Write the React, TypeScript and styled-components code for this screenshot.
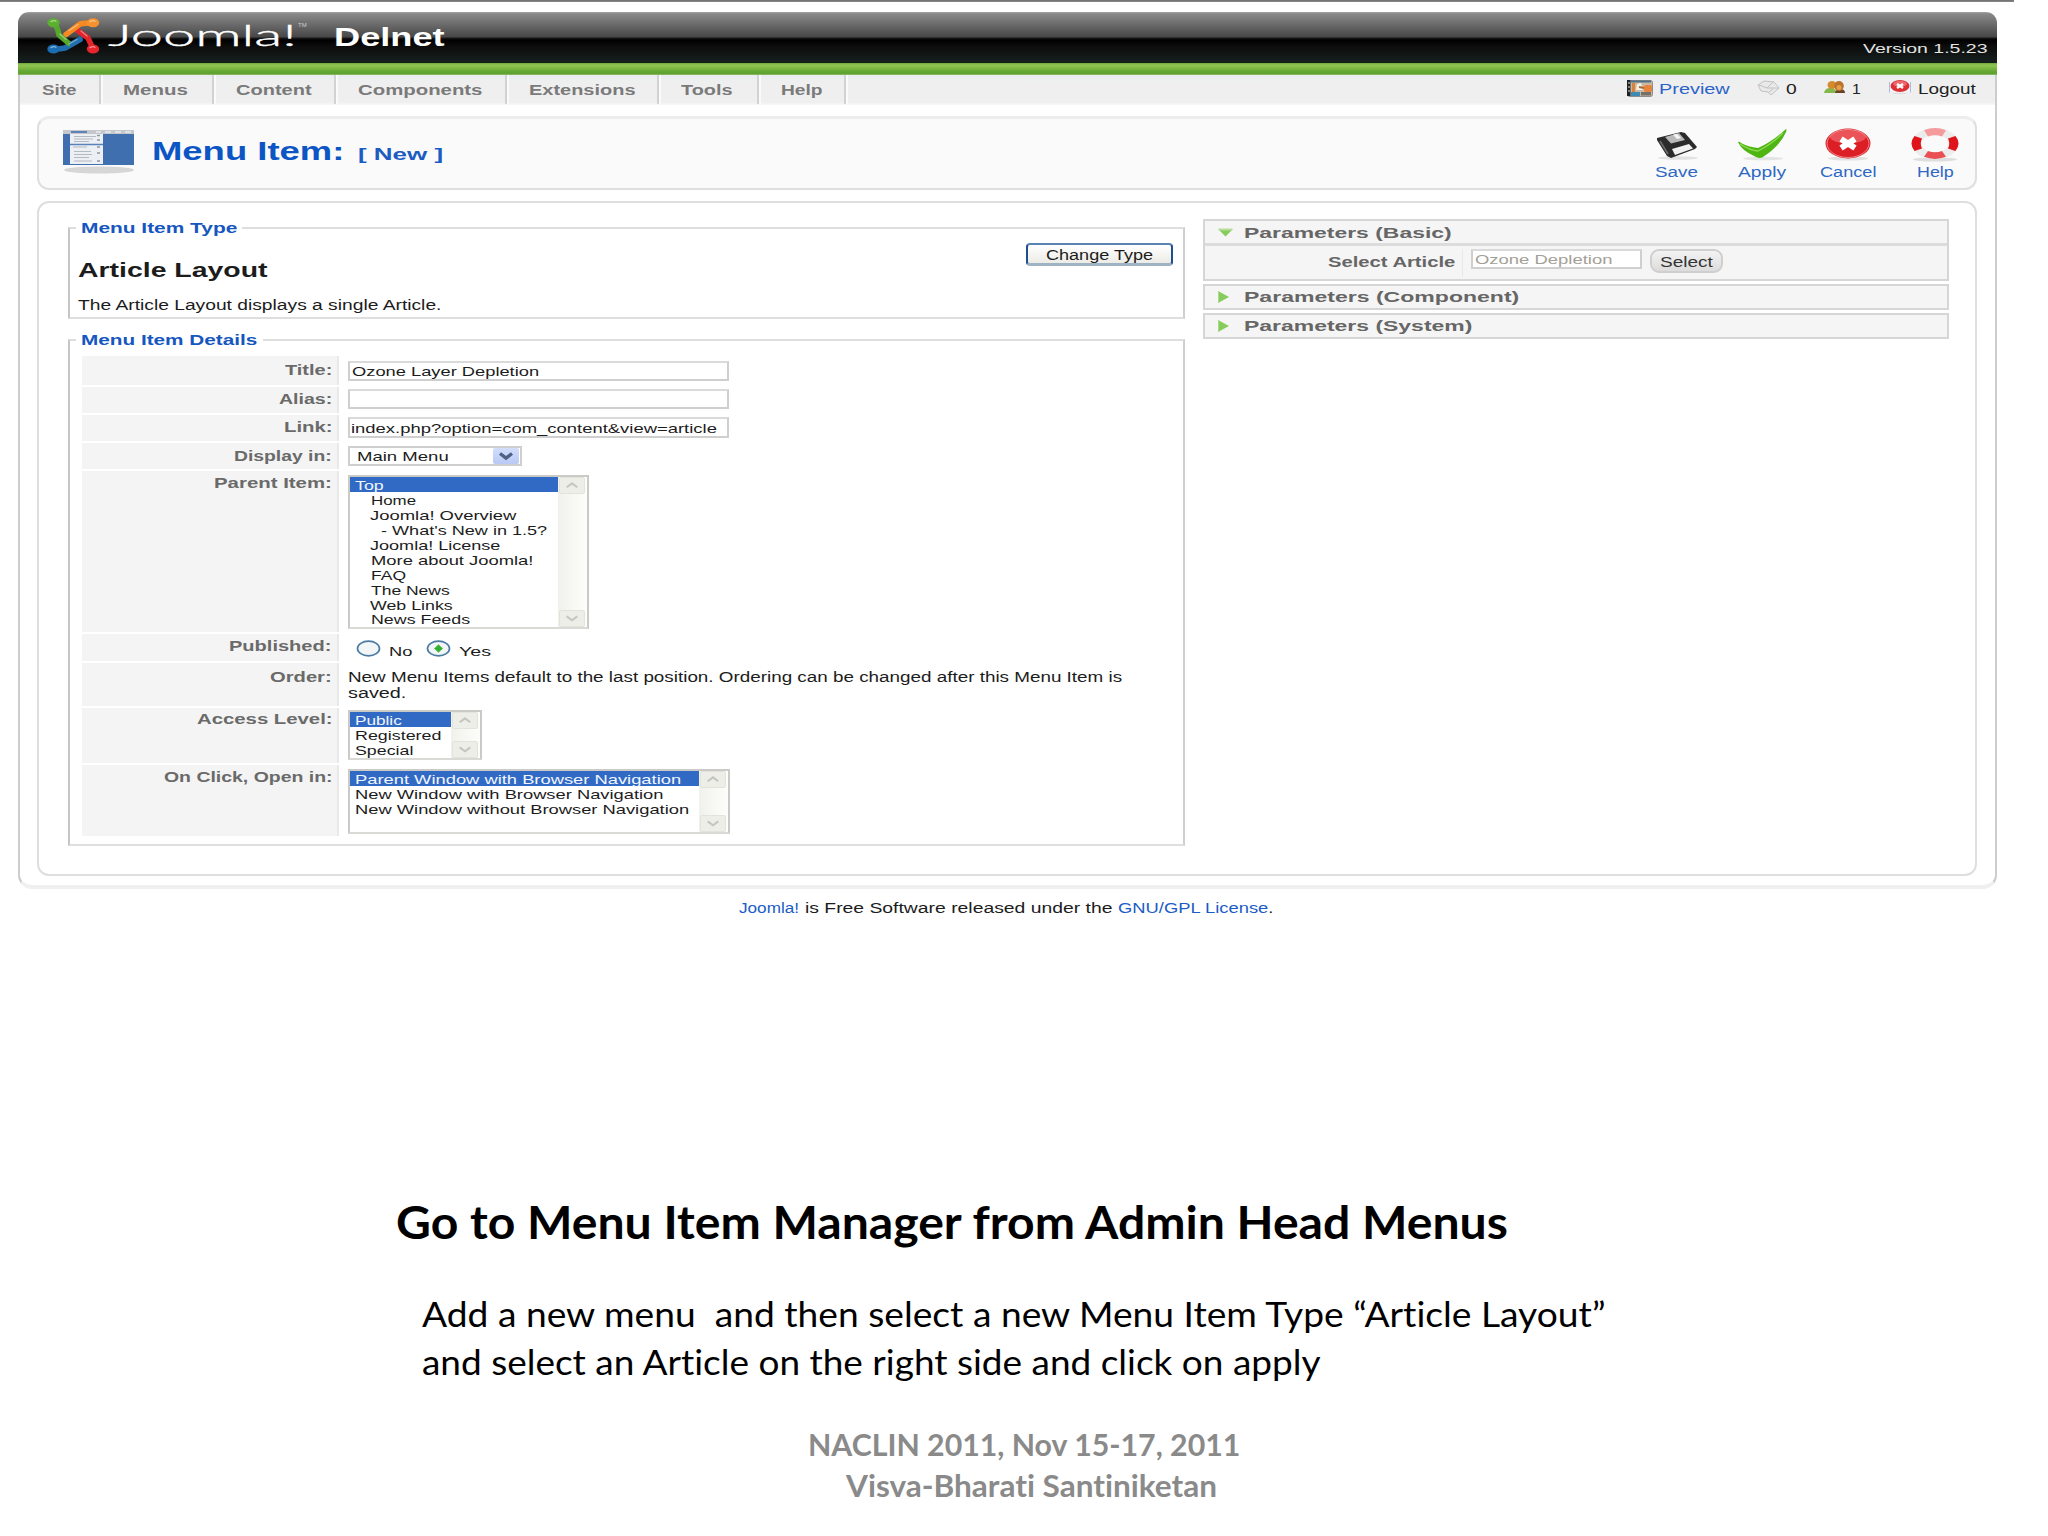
import React, { useLayoutEffect, useRef, useState } from 'react';
import styled, { createGlobalStyle } from 'styled-components';

const Global = createGlobalStyle`
  *, *::before, *::after { box-sizing: border-box; }
  body { margin: 0; background: #fff; overflow: hidden; font-family: "Liberation Sans", Arial, sans-serif; font-variant-ligatures: none; color: #1c1c1c; }
`;

/* ---------- text that stretches to a set width ---------- */

const FitBox = styled.span<{ $w: number; $h: number }>`
  display: block;
  flex: none;
  width: ${(p) => p.$w}px;
  height: ${(p) => p.$h}px;
  line-height: ${(p) => p.$h}px;
  white-space: pre;
`;

const FitInk = styled.span`
  display: inline-block;
  transform-origin: 0 50%;
`;

function Fit({ w, h = 16, children, className }: { w: number; h?: number; children: React.ReactNode; className?: string }) {
  const ref = useRef<HTMLSpanElement>(null);
  const [scale, setScale] = useState(1);
  useLayoutEffect(() => {
    const el = ref.current;
    if (el && el.offsetWidth) setScale(w / el.offsetWidth);
  }, [w]);
  return (
    <FitBox $w={w} $h={h} className={className}>
      <FitInk ref={ref} style={{ transform: `scaleX(${scale})` }}>{children}</FitInk>
    </FitBox>
  );
}

/* ---------- shell ---------- */

const Page = styled.div`
  width: 2048px;
  height: 1536px;
  display: flex;
  flex-direction: column;
  align-items: flex-start;
  overflow: hidden;
`;

const TopRule = styled.div`
  width: 2014px;
  height: 2px;
  background: linear-gradient(#6c6c6c, #8d8d8d);
`;

const Frame = styled.div`
  width: 1979px;
  margin: 10px 0 0 18px;
`;

const Header = styled.header`
  height: 51px;
  border-radius: 11px 11px 0 0;
  display: flex;
  align-items: flex-start;
  background: linear-gradient(#a4a4a4 0, #888 2px, #474747 25px, #1a1a1a 26px, #000 28px, #0c0c0c 34px, #16201e 50px, #0b1a12 51px);
  color: #fff;
`;

const LogoMark = styled.svg`
  width: 53px;
  height: 36px;
  margin: 6px 0 0 29px;
  flex: none;
`;

const Wordmark = styled(Fit)`
  margin: 8px 0 0 8px;
  font-family: Lato, sans-serif;
  font-weight: 300;
  font-size: 29px;
  -webkit-text-stroke: 0.4px #fff;
`;

const Trademark = styled(Fit)`
  margin: 9px 0 0 1px;
  font-size: 6px;
  color: #ccc;
`;

const SiteName = styled(Fit)`
  margin: 10px 0 0 27px;
  font-size: 25px;
  font-weight: bold;
`;

const Version = styled(Fit)`
  margin: 29px 10px 0 auto;
  font-size: 13.5px;
  color: #e4e4e4;
`;

const GreenBar = styled.div`
  height: 12px;
  background: linear-gradient(#6fa53b 0, #8fc552 2px, #86be48 4px, #66a935 8px, #5f9f30 11px, #a9cc8c 12px);
`;

const Body = styled.div`
  height: 814px;
  border: 2px solid #cdcdcd;
  border-top: 0;
  border-bottom: 4px solid #f0f0f0;
  border-radius: 0 0 14px 14px;
`;

/* ---------- menu bar ---------- */

const MenuBar = styled.nav`
  height: 30px;
  display: flex;
  background: linear-gradient(#e9edf0, #efefef 8px, #efefef 27px, #f8f8f8);
`;

const MenuEntry = styled.div<{ $w: number }>`
  width: ${(p) => p.$w}px;
  height: 29px;
  padding: 7px 0 0 22px;
  border-right: 2px solid #d2d2d2;
  box-shadow: 2px 0 0 #fafafa;
  font-size: 14.5px;
  font-weight: bold;
  color: #7a7a7a;
`;

const Status = styled.div`
  margin-left: auto;
  padding: 6px 19px 0 0;
  display: flex;
  gap: 27px;
`;

const StatusItem = styled.div<{ $link?: boolean }>`
  display: flex;
  gap: 6px;
  font-size: 14px;
  color: ${(p) => (p.$link ? '#2a62c8' : '#222')};
`;

const StatusIcon = styled.svg`
  flex: none;
  margin-top: -1px;
`;

/* ---------- title bar ---------- */

const TitleBar = styled.section`
  width: 1940px;
  height: 74px;
  margin: 11px 0 0 17px;
  display: flex;
  border: 2px solid #dfdfdf;
  border-top: 3px solid #ededed;
  border-radius: 12px;
  background: #fafafa;
`;

const TitleIcon = styled.svg`
  width: 71px;
  height: 45px;
  margin: 11px 0 0 24px;
`;

const Title = styled(Fit)`
  margin: 17px 0 0 18px;
  font-size: 26px;
  font-weight: bold;
  color: #0b55c4;
`;

const TitleNote = styled(Fit)`
  margin: 25px 0 0 14px;
  font-size: 16.5px;
  font-weight: bold;
  color: #1c5cc2;
`;

const Tools = styled.div`
  margin-left: auto;
  display: flex;
  margin-right: -4px;
`;

const Tool = styled.div<{ $w: number }>`
  width: ${(p) => p.$w}px;
  padding-top: 9px;
  display: flex;
  flex-direction: column;
  align-items: center;
  font-size: 14px;
  color: #2f68c4;
`;

const ToolIcon = styled.svg`
  width: 52px;
  height: 36px;
`;

/* ---------- content ---------- */

const Content = styled.main`
  width: 1940px;
  height: 675px;
  margin: 11px 0 0 17px;
  padding: 16px 0 0 29px;
  display: flex;
  gap: 18px;
  border: 2px solid #dedede;
  border-radius: 12px;
`;

const LeftColumn = styled.div`
  width: 1117px;
  display: flex;
  flex-direction: column;
  gap: 12px;
`;

const FieldSet = styled.fieldset<{ $h: number }>`
  margin: 0;
  padding: 0;
  min-width: 0;
  height: ${(p) => p.$h}px;
  border: 2px solid #dedede;
  border-left-color: #c6c6c6;
  border-right-color: #cfcfcf;
`;

const Legend = styled.legend`
  margin-left: 6px;
  padding: 0 5px;
  font-size: 15px;
  font-weight: bold;
  color: #1556bf;
`;

const TypeRow = styled.div`
  display: flex;
  justify-content: space-between;
  padding: 7px 10px 0 8px;
`;

const TypeHeading = styled(Fit)`
  margin-top: 15px;
  font-size: 20px;
  font-weight: bold;
`;

const TypeNote = styled(Fit)`
  margin-top: 15px;
  font-size: 14px;
`;

const ChangeButton = styled.button`
  width: 147px;
  height: 23px;
  padding: 2px 0 0 18px;
  border: 2px solid #1e4f8c;
  border-bottom: 3px solid #9fb3c4;
  border-top-color: #5a82b2;
  border-radius: 4px;
  background: linear-gradient(#fff, #ecebe6);
  font: 14px "Liberation Sans", Arial, sans-serif;
  color: #1c1c1c;
  text-align: left;
`;

const Rows = styled.div`
  padding: 8px 0 0 12px;
  display: flex;
  flex-direction: column;
  gap: 2px;
`;

const Row = styled.div<{ $h: number }>`
  height: ${(p) => p.$h}px;
  display: grid;
  grid-template-columns: 257px 1fr;
`;

const Label = styled.div<{ $top: number }>`
  display: flex;
  justify-content: flex-end;
  padding: ${(p) => p.$top}px 5px 0 0;
  background: #f4f4f4;
  border-right: 2px solid #e9e9e9;
  font-size: 14px;
  font-weight: bold;
  color: #6a6a6a;
`;

const Control = styled.div<{ $top: number }>`
  padding: ${(p) => p.$top}px 0 0 9px;
  font-size: 14px;
`;

const TextBox = styled.div<{ $w: number; $h: number; $pad?: number; $muted?: boolean }>`
  width: ${(p) => p.$w}px;
  height: ${(p) => p.$h}px;
  padding: 1px 0 0 ${(p) => p.$pad ?? 2}px;
  border: 2px solid #cfcfcf;
  border-top-color: #dadada;
  background: #fff;
  font-size: 13.5px;
  color: ${(p) => (p.$muted ? '#a3a097' : '#1c1c1c')};
`;

const Combo = styled.div`
  width: 174px;
  height: 20px;
  display: flex;
  justify-content: space-between;
  padding-left: 7px;
  border: 2px solid #cfcfcf;
  font-size: 13.5px;
`;

const ComboArrow = styled.svg`
  width: 26px;
  height: 16px;
  margin-right: 1px;
  border-radius: 2px;
  background: linear-gradient(#d3ddfc, #b9c9f5);
`;

const ListBox = styled.div<{ $w: number; $h: number }>`
  width: ${(p) => p.$w}px;
  height: ${(p) => p.$h}px;
  display: flex;
  border: 2px solid #cbcac6;
  border-bottom-color: #d9d9d6;
  background: #fff;
`;

const Options = styled.div`
  flex: 1;
`;

const Option = styled.div<{ $indent?: number; $selected?: boolean }>`
  height: 14.95px;
  padding-left: ${(p) => 5 + (p.$indent ?? 0)}px;
  font-size: 13.5px;
  background: ${(p) => (p.$selected ? '#316ac5' : 'transparent')};
  color: ${(p) => (p.$selected ? '#f2f6fd' : '#1c1c1c')};
`;

const ScrollTrack = styled.div`
  width: 29px;
  display: flex;
  flex-direction: column;
  justify-content: space-between;
  padding: 0 2px 0 1px;
  background: linear-gradient(90deg, #f1f1ec, #fdfdfb);
`;

const ScrollCap = styled.svg`
  width: 26px;
  height: 17px;
  border: 1px solid #e3e3dc;
  border-radius: 2px;
  background: #eeeee8;
`;

const RadioRow = styled.div`
  display: flex;
  align-items: flex-start;
  padding-left: 8px;
  font-size: 13.5px;
`;

const RadioDot = styled.svg`
  width: 25px;
  height: 17px;
`;

const RadioText = styled(Fit)`
  margin: 3px 14px 0 8px;
`;

/* ---------- accordion ---------- */

const RightColumn = styled.div`
  width: 746px;
  display: flex;
  flex-direction: column;
  gap: 3px;
`;

const Panel = styled.section`
  border: 2px solid #d6d6d6;
  background: #f5f5f5;
`;

const PanelHead = styled.div`
  height: 22px;
  display: flex;
  padding: 2px 0 0 13px;
  font-size: 15.5px;
  font-weight: bold;
  color: #666;
`;

const Marker = styled.svg`
  width: 16px;
  height: 13px;
  margin: 3px 10px 0 0;
`;

const PanelBody = styled.div`
  height: 36px;
  display: grid;
  grid-template-columns: 258px 171px auto;
  column-gap: 8px;
  justify-content: start;
  border-top: 3px solid #dcdcdc;
  padding-top: 3px;
`;

const ParamLabel = styled.div`
  height: 28px;
  display: flex;
  justify-content: flex-end;
  padding: 5px 7px 0 0;
  border-right: 1px solid #e8e8e8;
  font-size: 14px;
  font-weight: bold;
  color: #666;
`;

const SelectButton = styled.div`
  width: 73px;
  height: 24px;
  padding: 3px 0 0 8px;
  border: 2px solid #cfcfcf;
  border-radius: 9px;
  background: linear-gradient(#f3f3f3, #dcdcdc);
  font-size: 14px;
  color: #333;
`;

/* ---------- captions ---------- */

const Credit = styled.div`
  margin: 11px 0 0 739px;
  display: flex;
  font-size: 14px;
`;

const CreditLink = styled(Fit)`
  color: #1b5cc6;
  margin-right: 6px;
`;

const CreditText = styled(Fit)`
  margin-right: 5px;
`;

const CreditSpan = styled.span`
  color: #1b5cc6;
`;

const Caption = styled.div`
  margin: 276px 0 0 396px;
  font-family: Lato, Carlito, sans-serif;
  color: #000;
`;

const CaptionTitle = styled(Fit)`
  font-size: 45px;
  font-weight: bold;
`;

const CaptionText = styled.div`
  margin: 38px 0 0 26px;
  font-size: 34.5px;
`;

const SlideFooter = styled.div`
  width: 432px;
  margin: 38px 0 0 412px;
  display: flex;
  flex-direction: column;
  align-items: center;
  font-size: 29.5px;
  font-weight: bold;
  color: #8a8a8a;
`;

const SecondLine = styled(Fit)`
  margin-left: 14px;
`;

/* ---------- drawings ---------- */

const JoomlaMark = () => (
  <LogoMark viewBox="0 0 53 36" fill="none" strokeLinecap="round" strokeLinejoin="round">
    <path d="M7 31 Q14 31 18 30 L33 21.500" stroke="#1f6fae" strokeWidth="5.500" />
    <path d="M46 31 Q43 24 41 20 L30 12" stroke="#e2252b" strokeWidth="5.500" />
    <path d="M46 5 Q37 5 33 6 L19 16.500" stroke="#f58a22" strokeWidth="5.500" />
    <path d="M7 5 Q11 10 12 17 L22 25.500" stroke="#55a82c" strokeWidth="5.500" />
    <path d="M25 26 L33 21.500" stroke="#1f6fae" strokeWidth="5" />
    <ellipse cx="6.500" cy="4.800" rx="6.200" ry="4.500" fill="#5cb030" />
    <ellipse cx="46" cy="4.800" rx="6.200" ry="4.500" fill="#f7922e" />
    <ellipse cx="6.500" cy="31" rx="6.200" ry="4.500" fill="#1b6cb0" />
    <ellipse cx="46" cy="31" rx="6.200" ry="4.500" fill="#e6262c" />
    <path d="M13 16 L19 21.500M22 12.500 L31 6.500M34 13 L40 18M22 26 L30 21.500" stroke="#fff" strokeOpacity=".4" strokeWidth="1.400" />
    <path d="M4 3.600 Q7 2 9 3.200M43 3.600 Q46 2 48 3.200M4 29.600 Q7 28 9 29.200M43 29.600 Q46 28 48 29.200" stroke="#fff" strokeOpacity=".5" strokeWidth="1.300" />
  </LogoMark>
);

const MenuPicture = () => (
  <TitleIcon viewBox="0 0 71 45">
    <ellipse cx="36" cy="40" rx="35" ry="3.600" fill="#d6d6d6" />
    <rect width="71" height="35" fill="#3f6fae" />
    <rect width="71" height="4" fill="#c4c8cc" />
    <path d="M8 2H24" stroke="#5f83b8" strokeWidth="2" />
    <path d="M33 2H38M42 2H48M52 2H58M62 2H68" stroke="#dfe2e6" strokeWidth="2" />
    <rect x="7" y="4" width="33" height="30" fill="#eceff3" />
    <path d="M7 14.500H40" stroke="#5a82ba" strokeWidth="1.600" />
    <path d="M11 6.500H33M11 9H30M11 11.500H26M10 17H24M11 21.500H28M11 24.500H29M11 27.500H26M11 31H29" stroke="#b4bac2" strokeWidth="1.100" />
    <path d="M34 5.500h3M34 10h3M34 17h3M34 23h3M34 31h3" stroke="#8d96a3" strokeWidth="1.500" />
  </TitleIcon>
);

const PreviewIcon = () => (
  <StatusIcon width="26" height="17" viewBox="0 0 26 17">
    <rect x=".5" y=".5" width="25" height="16" rx="2" fill="#c9b9a4" stroke="#8d8d90" />
    <rect width="3.500" height="16" fill="#222" />
    <path d="M1 3h2M1 7h2M1 11h2" stroke="#ddd" />
    <path d="M3 1.500H24" stroke="#4f7086" strokeWidth="2" />
    <path d="M5 3h3v9H5z" fill="#d9823c" />
    <path d="M9 10 L10 4 L14 3 L16 10Z" fill="#f7f1e4" />
    <rect x="17" y="5" width="8" height="7" rx="2" fill="#e8833c" />
    <path d="M12 7l5 1" stroke="#a66a34" strokeWidth="2" />
    <rect x="4" y="12" width="9" height="4" fill="#3d8ab4" />
    <rect x="14" y="12" width="10" height="3.500" fill="#74706c" />
  </StatusIcon>
);

const MailIcon = () => (
  <StatusIcon width="23" height="16" viewBox="0 0 23 16">
    <path d="M1 5 L7 1 L17 2 L22 8 L14 15 L11 12 L4 11 Z" fill="#e9e9e9" stroke="#c2c2c2" />
    <path d="M2 5 L10 8 L16 2 M10 8 L21 8 M12 12 L16 9" fill="none" stroke="#c2c2c2" />
  </StatusIcon>
);

const UsersIcon = () => (
  <StatusIcon width="22" height="15" viewBox="0 0 22 15">
    <path d="M0 13 Q1 8 6 8 Q12 8 13 13Z" fill="#84b84c" />
    <path d="M11 13 Q12 9 16 9 Q21 9 21 13Z" fill="#6b4226" />
    <ellipse cx="8" cy="5" rx="4.500" ry="4" fill="#d38b2d" />
    <ellipse cx="15" cy="6" rx="4.800" ry="5" fill="#b9742a" />
    <ellipse cx="15" cy="7.500" rx="2.500" ry="2.500" fill="#e6a04c" />
  </StatusIcon>
);

const LogoutIcon = () => (
  <StatusIcon width="24" height="16" viewBox="0 0 24 16">
    <rect x="1" y="2" width="22" height="10" fill="#f2f4fa" />
    <path d="M1.500 2V12.500M22.500 2V12.500" stroke="#aeb9d6" />
    <ellipse cx="12" cy="6" rx="9.500" ry="6" fill="#dd3036" />
    <ellipse cx="12" cy="3.800" rx="7" ry="3" fill="#f08284" fillOpacity=".7" />
    <path d="M9 4l6 4M15 4l-6 4" stroke="#fff" strokeWidth="2.400" />
    <path d="M5 13.500H18" stroke="#dcdce2" />
  </StatusIcon>
);

const SaveIcon = () => (
  <ToolIcon viewBox="0 0 52 36">
    <ellipse cx="27" cy="30" rx="20" ry="1.800" fill="#e2e2e2" />
    <path d="M6 10 L30 4 L34 5 L46 19 L44 21 L20 30 L16 28 L6 12 Z" fill="#2b2b2b" />
    <path d="M14 9 L28 5 L34 12 L20 15.500 Z" fill="#b9b9b9" />
    <path d="M22 6.800 L26 5.700 L30 10 L26 11 Z" fill="#f4f4f4" />
    <path d="M21 21 L38 16 L42 20.500 L24 27 Z" fill="#f1f1f1" />
    <path d="M9 13 L17 26" stroke="#6d6d6d" strokeWidth="1.600" />
  </ToolIcon>
);

const ApplyIcon = () => (
  <ToolIcon viewBox="0 0 52 36">
    <ellipse cx="27" cy="30.500" rx="20" ry="1.800" fill="#e4e4e4" />
    <path d="M2 14 Q3 13 5 15 Q12 19 22 20 Q36 14 50 1 Q51 2 50 4 Q44 18 27 29 Q23 31 19 28.500 Q5 22 2 14Z" fill="#4fb512" />
    <path d="M4 16 Q14 22.500 22 23 Q36 16 47 5" stroke="#8edb52" strokeWidth="1.300" fill="none" />
  </ToolIcon>
);

const CancelIcon = () => (
  <ToolIcon viewBox="0 0 52 36">
    <ellipse cx="26" cy="30.500" rx="20" ry="2" fill="#e2e2e2" />
    <ellipse cx="26" cy="15.500" rx="22.500" ry="15" fill="#dc1f26" />
    <ellipse cx="26" cy="8.500" rx="18" ry="7" fill="#ef6a6c" fillOpacity=".7" />
    <ellipse cx="26" cy="15.500" rx="21" ry="14" fill="none" stroke="#f0878a" strokeWidth="1" />
    <path d="M19 11 L33 20 M33 11 L19 20" stroke="#fff" strokeWidth="6" />
  </ToolIcon>
);

const HelpIcon = () => (
  <ToolIcon viewBox="0 0 52 36">
    <ellipse cx="26" cy="31.500" rx="22" ry="2" fill="#dedede" />
    <path fillRule="evenodd" d="M2.500 15.500a23.500 15.500 0 1 0 47 0a23.500 15.500 0 1 0 -47 0ZM12.500 15.500a13.500 8.700 0 1 1 27 0a13.500 8.700 0 1 1 -27 0Z" fill="#ececec" />
    <path d="M15 2.200 Q26 -2 37 2.200 L33 8.500 Q26 6 19 8.500Z" fill="#f59b9e" />
    <path d="M15 28.800 Q26 33 37 28.800 L33 23 Q26 25.500 19 23Z" fill="#ea5053" />
    <path d="M5.500 8 Q-.5 15.500 5.500 23 L13 20.500 Q10.500 15.500 13 10.500Z" fill="#e0151b" />
    <path d="M46.500 8 Q52.500 15.500 46.500 23 L39 20.500 Q41.500 15.500 39 10.500Z" fill="#e0151b" />
  </ToolIcon>
);

const Scrollbar = () => (
  <ScrollTrack>
    <ScrollCap viewBox="0 0 26 17"><path d="M7 10.500 L13 6 L19 10.500" fill="none" stroke="#c6c6be" strokeWidth="2.400" /></ScrollCap>
    <ScrollCap viewBox="0 0 26 17"><path d="M7 6 L13 10.500 L19 6" fill="none" stroke="#c6c6be" strokeWidth="2.400" /></ScrollCap>
  </ScrollTrack>
);

const Radio = ({ on }: { on?: boolean }) => (
  <RadioDot viewBox="0 0 25 17">
    <ellipse cx="12.500" cy="8.500" rx="11" ry="7.300" fill="#f3f6f6" stroke="#4b7ba4" strokeWidth="1.700" />
    {on && <path d="M12.500 4.800 L16.500 8.500 L12.500 12.200 L8.500 8.500Z" fill="#2fae2f" stroke="#5cc45c" />}
  </RadioDot>
);

const PanelMarker = ({ open }: { open?: boolean }) => (
  <Marker viewBox="0 0 16 13">
    {open ? (
      <><path d="M0 3H15L7.500 10.500Z" fill="#86cc5c" /><path d="M1 3.500H14" stroke="#b5dd9c" strokeWidth="2" /></>
    ) : (
      <><path d="M0 0L11 6L0 12Z" fill="#86cc5c" /><path d="M.5 1V11" stroke="#a9db8a" /></>
    )}
  </Marker>
);

/* ---------- data ---------- */

const menu: [string, number, number][] = [
  ['Site', 81, 35], ['Menus', 113, 65], ['Content', 122, 76], ['Components', 171, 125],
  ['Extensions', 152, 106], ['Tools', 100, 52], ['Help', 87, 41],
];

const tools: [string, number, number, () => React.JSX.Element][] = [
  ['Save', 85, 43, SaveIcon], ['Apply', 86, 48, ApplyIcon], ['Cancel', 86, 57, CancelIcon], ['Help', 88, 37, HelpIcon],
];

type Item = [string, number, number?];

const parents: Item[] = [
  ['Top', 29], ['Home', 45, 16], ['Joomla! Overview', 146, 15], ["- What's New in 1.5?", 166, 26],
  ['Joomla! License', 131, 15], ['More about Joomla!', 162, 16], ['FAQ', 35, 16], ['The News', 79, 16],
  ['Web Links', 83, 15], ['News Feeds', 99, 16],
];
const access: Item[] = [['Public', 47], ['Registered', 86], ['Special', 58]];
const targets: Item[] = [
  ['Parent Window with Browser Navigation', 326],
  ['New Window with Browser Navigation', 308],
  ['New Window without Browser Navigation', 334],
];

const List = ({ w, h, items }: { w: number; h: number; items: Item[] }) => (
  <ListBox $w={w} $h={h}>
    <Options>
      {items.map(([text, width, indent], i) => (
        <Option key={text} $selected={i === 0} $indent={indent}><Fit w={width} h={18}>{text}</Fit></Option>
      ))}
    </Options>
    <Scrollbar />
  </ListBox>
);

const Field = ({ h, label, w, labelTop, top, children }: {
  h: number; label: string; w: number; labelTop: number; top: number; children: React.ReactNode;
}) => (
  <Row $h={h}>
    <Label $top={labelTop}><Fit w={w}>{label}</Fit></Label>
    <Control $top={top}>{children}</Control>
  </Row>
);

export default function App() {
  return (
    <Page>
      <Global />
      <TopRule />
      <Frame>
        <Header>
          <JoomlaMark />
          <Wordmark w={189} h={30}>Joomla!</Wordmark>
          <Trademark w={9} h={8}>TM</Trademark>
          <SiteName w={110} h={30}>Delnet</SiteName>
          <Version w={124}>Version 1.5.23</Version>
        </Header>
        <GreenBar />
        <Body>
          <MenuBar>
            {menu.map(([text, w, tw]) => (
              <MenuEntry key={text} $w={w}><Fit w={tw}>{text}</Fit></MenuEntry>
            ))}
            <Status>
              <StatusItem $link><PreviewIcon /><Fit w={71}>Preview</Fit></StatusItem>
              <StatusItem><MailIcon /><Fit w={11}>0</Fit></StatusItem>
              <StatusItem><UsersIcon /><Fit w={9}>1</Fit></StatusItem>
              <StatusItem><LogoutIcon /><Fit w={58}>Logout</Fit></StatusItem>
            </Status>
          </MenuBar>

          <TitleBar>
            <MenuPicture />
            <Title w={192} h={30}>Menu Item:</Title>
            <TitleNote w={85} h={20}>[ New ]</TitleNote>
            <Tools>
              {tools.map(([text, w, tw, Icon]) => (
                <Tool key={text} $w={w}><Icon /><Fit w={tw}>{text}</Fit></Tool>
              ))}
            </Tools>
          </TitleBar>

          <Content>
            <LeftColumn>
              <FieldSet $h={100}>
                <Legend><Fit w={156} h={17}>Menu Item Type</Fit></Legend>
                <TypeRow>
                  <div>
                    <TypeHeading w={189} h={24}>Article Layout</TypeHeading>
                    <TypeNote w={364}>The Article Layout displays a single Article.</TypeNote>
                  </div>
                  <ChangeButton><Fit w={107}>Change Type</Fit></ChangeButton>
                </TypeRow>
              </FieldSet>

              <FieldSet $h={515}>
                <Legend><Fit w={177} h={17}>Menu Item Details</Fit></Legend>
                <Rows>
                  <Field h={29} label="Title:" w={47} labelTop={6} top={5}>
                    <TextBox $w={381} $h={20}><Fit w={187}>Ozone Layer Depletion</Fit></TextBox>
                  </Field>
                  <Field h={26} label="Alias:" w={53} labelTop={4} top={2}>
                    <TextBox $w={381} $h={20} />
                  </Field>
                  <Field h={26} label="Link:" w={48} labelTop={4} top={2}>
                    <TextBox $w={381} $h={21} $pad={1}><Fit w={366} h={17}>index.php?option=com_content&amp;view=article</Fit></TextBox>
                  </Field>
                  <Field h={26} label="Display in:" w={98} labelTop={5} top={3}>
                    <Combo>
                      <Fit w={92} h={18}>Main Menu</Fit>
                      <ComboArrow viewBox="0 0 26 16"><path d="M7 5.500 L13 10 L19 5.500" fill="none" stroke="#4d6185" strokeWidth="3.400" /></ComboArrow>
                    </Combo>
                  </Field>
                  <Field h={161} label="Parent Item:" w={118} labelTop={4} top={4}>
                    <List w={241} h={154} items={parents} />
                  </Field>
                  <Field h={27} label="Published:" w={103} labelTop={4} top={6}>
                    <RadioRow>
                      <Radio /><RadioText w={23} h={17}>No</RadioText>
                      <Radio on /><RadioText w={32} h={17}>Yes</RadioText>
                    </RadioRow>
                  </Field>
                  <Field h={43} label="Order:" w={62} labelTop={6} top={6}>
                    <Fit w={774}>New Menu Items default to the last position. Ordering can be changed after this Menu Item is</Fit>
                    <Fit w={58} h={17}>saved.</Fit>
                  </Field>
                  <Field h={55} label="Access Level:" w={135} labelTop={3} top={2}>
                    <List w={134} h={50} items={access} />
                  </Field>
                  <Field h={71} label="On Click, Open in:" w={168} labelTop={4} top={4}>
                    <List w={382} h={65} items={targets} />
                  </Field>
                </Rows>
              </FieldSet>
            </LeftColumn>

            <RightColumn>
              <Panel>
                <PanelHead><PanelMarker open /><Fit w={207} h={19}>Parameters (Basic)</Fit></PanelHead>
                <PanelBody>
                  <ParamLabel><Fit w={127}>Select Article</Fit></ParamLabel>
                  <TextBox $w={171} $h={20} $pad={2} $muted><Fit w={138}>Ozone Depletion</Fit></TextBox>
                  <SelectButton><Fit w={53}>Select</Fit></SelectButton>
                </PanelBody>
              </Panel>
              <Panel>
                <PanelHead><PanelMarker /><Fit w={275} h={18}>Parameters (Component)</Fit></PanelHead>
              </Panel>
              <Panel>
                <PanelHead><PanelMarker /><Fit w={228} h={18}>Parameters (System)</Fit></PanelHead>
              </Panel>
            </RightColumn>
          </Content>
        </Body>
      </Frame>

      <Credit>
        <CreditLink w={60}>Joomla!</CreditLink>
        <CreditText w={308}>is Free Software released under the</CreditText>
        <Fit w={156}><CreditSpan>GNU/GPL License</CreditSpan>.</Fit>
      </Credit>

      <Caption>
        <CaptionTitle w={1112} h={60}>Go to Menu Item Manager from Admin Head Menus</CaptionTitle>
        <CaptionText>
          <Fit w={1183} h={48}>Add a new menu  and then select a new Menu Item Type “Article Layout”</Fit>
          <Fit w={899} h={48}>and select an Article on the right side and click on apply</Fit>
        </CaptionText>
        <SlideFooter>
          <Fit w={432} h={41}>NACLIN 2011, Nov 15-17, 2011</Fit>
          <SecondLine w={371} h={41}>Visva-Bharati Santiniketan</SecondLine>
        </SlideFooter>
      </Caption>
    </Page>
  );
}
